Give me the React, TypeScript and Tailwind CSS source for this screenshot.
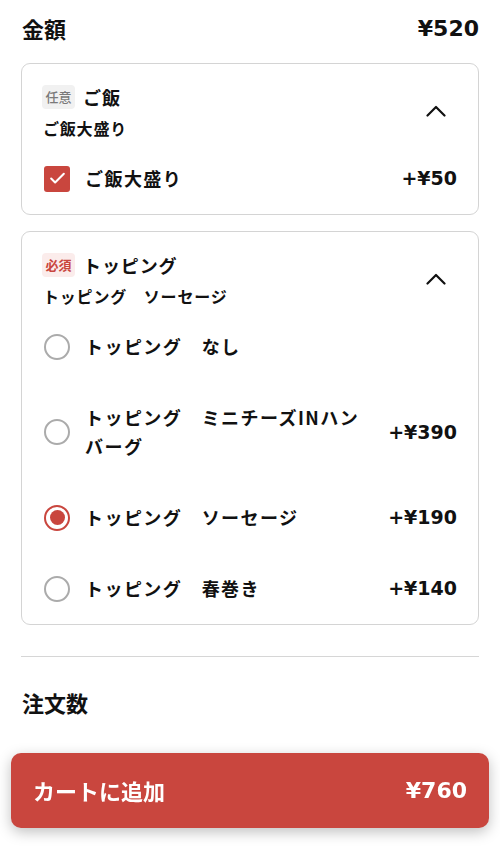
import { Check } from "lucide-react";

const RED = "#c9463e";
const NUM = { fontFamily: '"DejaVu Sans", "Noto Sans CJK JP", sans-serif' };

function Chevron() {
  return (
    <svg width="20" height="12" viewBox="0 0 20 12" fill="none" className="mr-[11px]">
      <path d="M1.5 10.5 L10 2 L18.5 10.5" stroke="#111" strokeWidth="2.2" strokeLinecap="round" strokeLinejoin="round" />
    </svg>
  );
}

function Radio({ checked }: { checked?: boolean }) {
  return checked ? (
    <span className="grid h-[26px] w-[26px] shrink-0 place-items-center rounded-full border-[2.5px] border-[#c9463e] bg-white">
      <span className="h-[15px] w-[15px] rounded-full bg-[#c9463e]" />
    </span>
  ) : (
    <span className="h-[26px] w-[26px] shrink-0 rounded-full border-[2.5px] border-[#ababab] bg-white" />
  );
}

function OptionRow({
  label,
  price,
  control,
}: {
  label: string;
  price?: string;
  control: React.ReactNode;
}) {
  return (
    <div className="flex items-center py-[21px] pl-[22px] pr-[21px]">
      {control}
      <div className="ml-[15px] max-w-[284px] flex-1 text-[18px] font-bold leading-[29px] tracking-[0.08em]">
        {label}
      </div>
      {price && (
        <div className="ml-auto shrink-0 pl-6 text-[19px] font-bold leading-[29px]" style={NUM}>
          {price}
        </div>
      )}
    </div>
  );
}

function CardHeader({
  badge,
  required,
  title,
  sub,
}: {
  badge: string;
  required?: boolean;
  title: string;
  sub: string;
}) {
  return (
    <div className="mb-[3px] flex items-center justify-between pl-[20px] pr-[21px] pt-[18px]">
      <div>
        <div className="flex h-[30px] items-center gap-2">
          <span
            className={
              required
                ? "grid h-[24px] w-[33px] place-items-center rounded-[4px] bg-[#fbeceb] text-[13px] font-bold text-[#c9463e]"
                : "grid h-[24px] w-[33px] place-items-center rounded-[4px] bg-[#f1f1f1] text-[13px] font-medium text-[#7a7a7a]"
            }
          >
            {badge}
          </span>
          <span className="text-[18px] font-bold tracking-[0.05em]">{title}</span>
        </div>
        <div className="mt-[4px] pl-[1px] text-[16px] font-bold leading-[24px] tracking-[0.05em]">{sub}</div>
      </div>
      <Chevron />
    </div>
  );
}

export default function App() {
  return (
    <div
      className="min-h-[846px] bg-white pb-[120px] text-[#111]"
      style={{ fontFamily: '"Noto Sans CJK JP", "Noto Sans", sans-serif' }}
    >
      <div className="px-[21px] pt-[13px]">
        <div className="flex h-[30px] items-center justify-between">
          <span className="pl-[1px] text-[22px] font-bold">金額</span>
          <span className="text-[22px] font-bold" style={NUM}>
            ¥520
          </span>
        </div>

        <div className="mt-[20px] rounded-[9px] border border-[#d4d4d4]">
          <CardHeader badge="任意" title="ご飯" sub="ご飯大盛り" />
          <OptionRow
            label="ご飯大盛り"
            price="+¥50"
            control={
              <span className="grid h-[26px] w-[26px] shrink-0 place-items-center rounded-[3px] bg-[#c9463e]">
                <Check size={19} strokeWidth={2.6} color="white" />
              </span>
            }
          />
        </div>

        <div className="mt-[16px] rounded-[9px] border border-[#d4d4d4]">
          <CardHeader badge="必須" required title="トッピング" sub="トッピング　ソーセージ" />
          <OptionRow label="トッピング　なし" control={<Radio />} />
          <OptionRow label="トッピング　ミニチーズINハンバーグ" price="+¥390" control={<Radio />} />
          <OptionRow label="トッピング　ソーセージ" price="+¥190" control={<Radio checked />} />
          <OptionRow label="トッピング　春巻き" price="+¥140" control={<Radio />} />
        </div>

        <div className="mt-[31px] h-px bg-[#d6d6d6]" />

        <div className="mt-[29px] pl-[1px] text-[22px] font-bold">注文数</div>
      </div>

      <div
        className="fixed bottom-[18px] left-[11px] right-[11px] flex h-[75px] items-center justify-between rounded-[10px] px-[22px] text-white shadow-[0_4px_14px_rgba(0,0,0,0.25)]"
        style={{ backgroundColor: RED }}
      >
        <span className="text-[22px] font-bold">カートに追加</span>
        <span className="text-[22px] font-bold" style={NUM}>
          ¥760
        </span>
      </div>
    </div>
  );
}
